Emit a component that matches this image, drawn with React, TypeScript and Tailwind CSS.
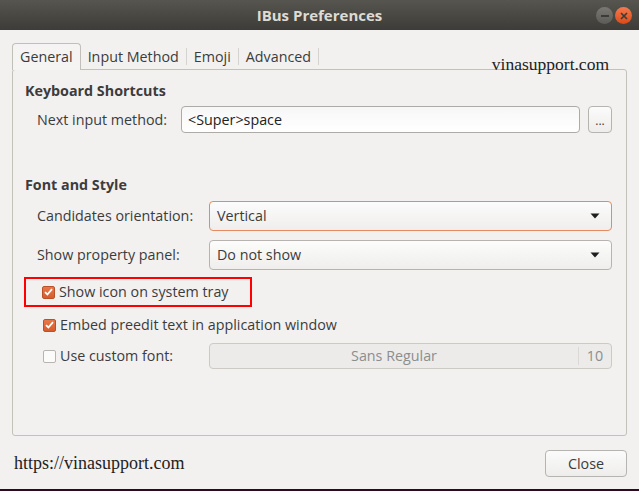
import React from 'react';

const ui = { fontFamily: '"Open Sans", "Noto Sans", sans-serif' };
const serif = { fontFamily: '"Liberation Serif", "DejaVu Serif", serif' };

const Arrow: React.FC = () => (
  <svg width="10" height="6" viewBox="0 0 10 6" className="shrink-0">
    <path d="M0.5 0.5 L9.5 0.5 L5 5.5 Z" fill="#1e1e1e" />
  </svg>
);

const Check: React.FC<{ checked?: boolean }> = ({ checked }) =>
  checked ? (
    <span className="flex h-[13px] w-[13px] shrink-0 items-center justify-center rounded-[2px] border border-[#b9522a] bg-gradient-to-b from-[#e7784a] to-[#d85c2a]">
      <svg width="9" height="8" viewBox="0 0 9 8">
        <path d="M1 4.2 L3.4 6.5 L8 1.2" fill="none" stroke="#ffffff" strokeWidth="1.8" />
      </svg>
    </span>
  ) : (
    <span className="h-[13px] w-[13px] shrink-0 rounded-[2px] border border-[#b8b5b0] bg-[#fbfbfa]" />
  );

const Combo: React.FC<{ value: string; focused?: boolean }> = ({ value, focused }) => (
  <div
    className={`flex h-[30px] flex-1 items-center justify-between rounded-[4px] border bg-gradient-to-b from-[#fcfcfc] to-[#efeeec] pl-[7px] pr-[11px] ${
      focused ? 'border-[#e58b62]' : 'border-[#b7b4af]'
    }`}
  >
    <span>{value}</span>
    <Arrow />
  </div>
);

export default function App() {
  return (
    <div
      className="flex h-[491px] w-[639px] flex-col overflow-hidden border-b-2 border-[#2c0a20] bg-[#f2f1f0] text-[14.3px] text-[#3c3c3c]"
      style={ui}
    >
      {/* title bar */}
      <div className="relative flex h-[30px] shrink-0 items-center justify-center bg-gradient-to-b from-[#57554f] to-[#3d3c38]">
        <span className="text-[15px] font-bold text-[#dfdbd2]">IBus Preferences</span>
        <div className="absolute right-[7px] top-[7px] flex gap-[2px]">
          <span className="flex h-[17px] w-[17px] items-center justify-center rounded-full bg-gradient-to-b from-[#7a7873] to-[#5c5b57]">
            <span className="h-[2px] w-[8px] bg-[#3c3b37]" />
          </span>
          <span className="flex h-[17px] w-[17px] items-center justify-center rounded-full bg-gradient-to-b from-[#f5794c] to-[#dd4814]">
            <svg width="8" height="8" viewBox="0 0 8 8">
              <path d="M1 1 L7 7 M7 1 L1 7" stroke="#3c3b37" strokeWidth="1.6" />
            </svg>
          </span>
        </div>
      </div>

      {/* body */}
      <div className="relative flex flex-1 flex-col px-[12px] pt-[13px]">
        <span className="absolute right-[30px] top-[21px] text-[17.5px] text-[#222]" style={serif}>
          vinasupport.com
        </span>

        {/* tabs */}
        <div className="relative z-10 -mb-px flex h-[27px] items-stretch">
          <div className="flex items-center rounded-t-[4px] border border-b-0 border-[#c2bfb9] bg-[#f5f4f3] px-[7px]">
            General
          </div>
          <div className="flex items-center px-[7px]">Input Method</div>
          <div className="my-[5px] w-px bg-[#d6d3ce]" />
          <div className="flex items-center px-[7px]">Emoji</div>
          <div className="my-[5px] w-px bg-[#d6d3ce]" />
          <div className="flex items-center px-[7px]">Advanced</div>
          <div className="my-[5px] w-px bg-[#d6d3ce]" />
        </div>

        {/* frame */}
        <div className="flex h-[367px] flex-col rounded-[3px] border border-[#c4c1bb] pl-[12px] pr-[14px] pt-[11px]">
          <div className="font-bold leading-[20px]">Keyboard Shortcuts</div>
          <div className="mt-[5px] flex h-[27px] items-center">
            <span className="w-[156px] pl-[12px]">Next input method:</span>
            <div className="flex h-[27px] flex-1 items-center rounded-[4px] border border-[#aeaba6] bg-gradient-to-b from-[#f7f7f7] to-[#ffffff] px-[6px] text-[#222]">
              &lt;Super&gt;space
            </div>
            <div className="ml-[8px] flex h-[27px] w-[24px] items-end justify-center rounded-[4px] border border-[#b7b4af] bg-gradient-to-b from-[#fbfbfb] to-[#eeedeb] pb-[5px] text-[12px] leading-none">
              ...
            </div>
          </div>

          <div className="mt-[42px] font-bold leading-[20px]">Font and Style</div>

          <div className="mt-[6px] flex items-center">
            <span className="w-[184px] pl-[12px]">Candidates orientation:</span>
            <Combo value="Vertical" focused />
          </div>
          <div className="mt-[9px] flex items-center">
            <span className="w-[184px] pl-[12px]">Show property panel:</span>
            <Combo value="Do not show" />
          </div>

          <div className="mt-[7px] -ml-[1px] flex h-[30px] w-[228px] items-center border-2 border-[#ff0000] pl-[16px]">
            <Check checked />
            <span className="ml-[4px]">Show icon on system tray</span>
          </div>

          <div className="mt-[9px] flex h-[18px] items-center pl-[18px]">
            <Check checked />
            <span className="ml-[4px]">Embed preedit text in application window</span>
          </div>

          <div className="mt-[9px] flex items-center">
            <div className="flex w-[184px] items-center pl-[18px]">
              <Check />
              <span className="ml-[4px]">Use custom font:</span>
            </div>
            <div className="flex h-[26px] flex-1 items-center rounded-[4px] border border-[#cdcac5] bg-[#ecebe9] text-[#8b8e8f]">
              <span className="flex-1 text-center">Sans Regular</span>
              <span className="h-[18px] w-px bg-[#dcd9d5]" />
              <span className="w-[32px] text-center">10</span>
            </div>
          </div>
        </div>

        {/* footer */}
        <div className="flex flex-1 items-center justify-between pl-[2px] pt-[2px]">
          <span className="text-[18px] text-[#222]" style={serif}>
            https://vinasupport.com
          </span>
          <div className="flex h-[27px] w-[82px] items-center justify-center rounded-[4px] border border-[#b7b4af] bg-gradient-to-b from-[#fbfbfb] to-[#eeedeb]">
            Close
          </div>
        </div>
      </div>
    </div>
  );
}
